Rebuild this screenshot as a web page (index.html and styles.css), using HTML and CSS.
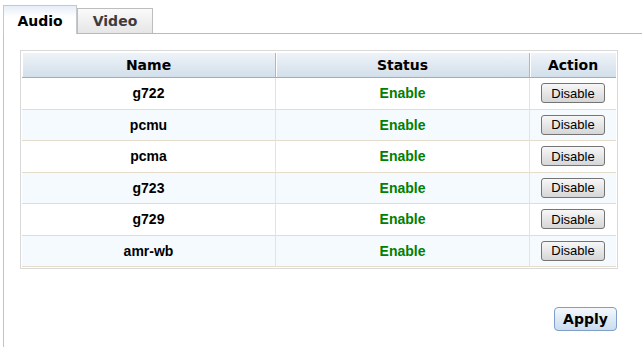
FILE: index.html
```html
<!DOCTYPE html>
<html lang="en">
<head>
  <meta charset="UTF-8" />
  <meta name="viewport" content="width=device-width, initial-scale=1" />
  <title>Codecs</title>
  <link rel="stylesheet" href="styles.css">
</head>
<body>

  <!-- Onglets -->
  <div class="tabs">
    <div class="tab active">Audio</div>
    <div class="tab">Video</div>
  </div>

  <div class="panel">
    <div class="codec-grid">
      <table class="codec-table">
        <thead>
          <tr>
            <th class="col-name">Name</th>
            <th class="col-status">Status</th>
            <th class="col-action">Action</th>
          </tr>
        </thead>
        <tbody>
          <tr><td>g722</td><td class="status">Enable</td><td><button class="btn-small">Disable</button></td></tr>
          <tr><td>pcmu</td><td class="status">Enable</td><td><button class="btn-small">Disable</button></td></tr>
          <tr><td>pcma</td><td class="status">Enable</td><td><button class="btn-small">Disable</button></td></tr>
          <tr><td>g723</td><td class="status">Enable</td><td><button class="btn-small">Disable</button></td></tr>
          <tr><td>g729</td><td class="status">Enable</td><td><button class="btn-small">Disable</button></td></tr>
          <tr><td>amr-wb</td><td class="status">Enable</td><td><button class="btn-small">Disable</button></td></tr>
        </tbody>
      </table>
    </div>

    <div class="actions">
      <button class="btn-apply">Apply</button>
    </div>
  </div>

</body>
</html>
```

FILE: styles.css
```css
body {
  margin: 0;
  background: #fff;
  font-family: "Liberation Sans", Arial, sans-serif;
  color: #000;
}

/* Onglets */
.tabs {
  display: flex;
  align-items: flex-end;
  padding: 5px 0 0 3px;
}
.tab {
  box-sizing: border-box;
  width: 76px;
  padding: 4px 0 4px;
  border: 1px solid #bdbdbd;
  border-bottom: none;
  background: linear-gradient(#fafafa, #e6e6e6);
  font-family: "DejaVu Sans", Verdana, sans-serif;
  font-weight: bold;
  font-size: 14px;
  line-height: 16px;
  text-align: center;
  color: #3c3c3c;
}
.tab.active {
  position: relative;
  width: 74px;
  padding: 7px 0 5px;
  margin-bottom: -1px;
  border-color: #c4c9d0;
  background: linear-gradient(#e6eef7, #fff 40%);
  color: #000;
}

/* Panneau */
.panel {
  margin-left: 3px;
  min-height: 313px;
  border-left: 1px solid #c3c3c3;
  border-top: 1px solid #b9b9b9;
  padding: 16px 0 0 16px;
}

.codec-grid {
  width: 598px;
  box-sizing: border-box;
  border: 1px solid #d9d9d9;
  padding: 2px 1px 1px;
}
.codec-table {
  width: 100%;
  border-collapse: separate;
  border-spacing: 0;
  table-layout: fixed;
}
.codec-table th {
  height: 24px;
  padding: 0;
  border-bottom: 1px solid #ababab;
  border-right: 1px solid #b6b6b6;
  box-shadow: inset 1px 0 0 #fff;
  background: linear-gradient(#eef3f8, #d2dfea);
  font-family: "DejaVu Sans", Verdana, sans-serif;
  font-size: 14px;
  font-weight: bold;
}
.codec-table th:last-child {
  border-right: none;
}
.col-name,
.col-status {
  width: 253px;
}
.codec-table td {
  height: 30.5px;
  padding: 0;
  border-bottom: 1px solid #e6dccb;
  border-right: 1px solid #ebe2d3;
  text-align: center;
  font-size: 14px;
  font-weight: bold;
}
.codec-table td:last-child {
  border-right: none;
}
.codec-table tbody tr:nth-child(even) td {
  background: #f5faff;
}
.status {
  color: #008000;
}

.btn-small {
  box-sizing: border-box;
  width: 64px;
  height: 20px;
  padding: 0;
  border: 1px solid #747474;
  border-radius: 3px;
  background: linear-gradient(#f7f7f7, #d6d6d6);
  font-family: "Liberation Sans", Arial, sans-serif;
  font-size: 13px;
  color: #000;
  cursor: pointer;
}

/* Bouton appliquer */
.actions {
  width: 598px;
  display: flex;
  justify-content: flex-end;
  padding-top: 38px;
}
.btn-apply {
  box-sizing: border-box;
  width: 63px;
  height: 24px;
  margin-right: 1px;
  padding: 0;
  border: 1px solid #7f9fc6;
  border-radius: 4px;
  background: linear-gradient(#f4f8fd, #c9dcef);
  font-family: "DejaVu Sans", Verdana, sans-serif;
  font-size: 14px;
  font-weight: bold;
  color: #000;
  cursor: pointer;
}
```
